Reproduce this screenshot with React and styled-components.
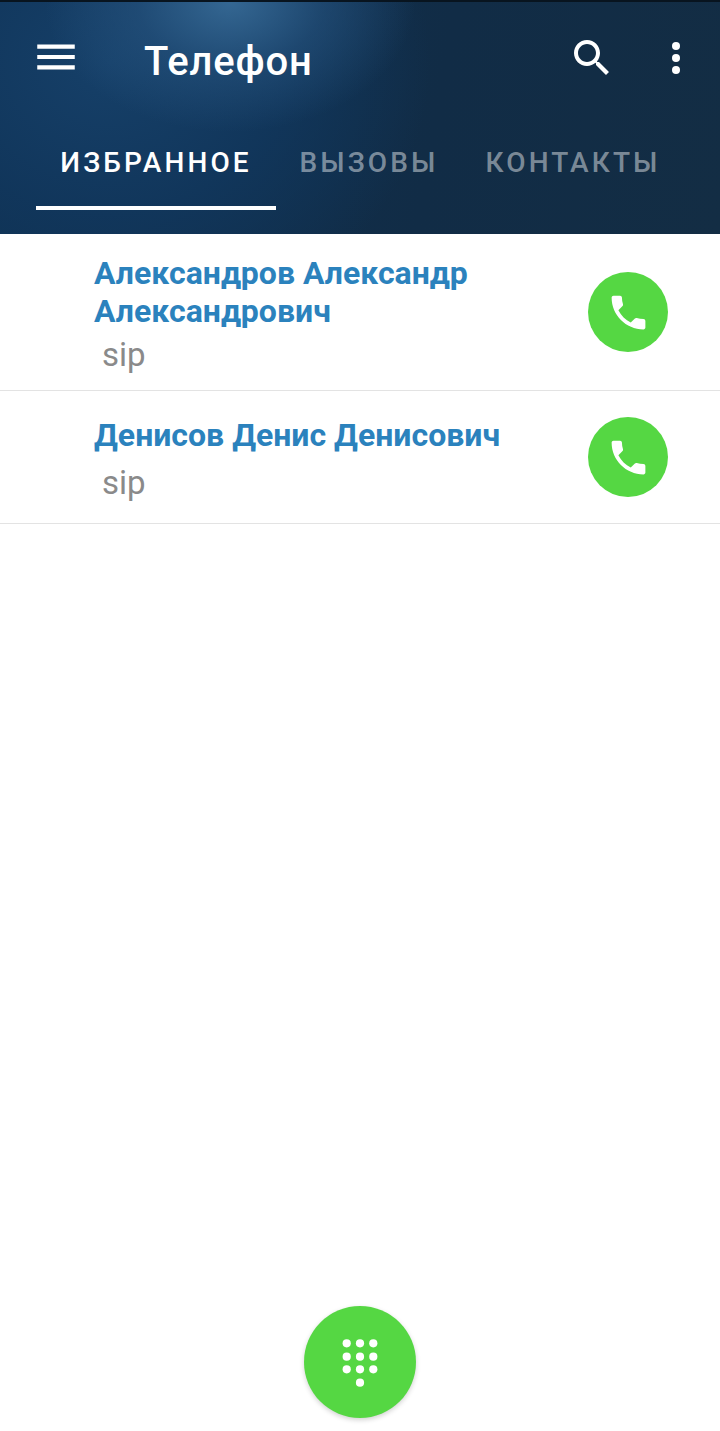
import React from 'react';
import styled, { createGlobalStyle } from 'styled-components';

const GlobalStyle = createGlobalStyle`
  html, body {
    margin: 0;
    padding: 0;
    background: #ffffff;
  }
`;

const Screen = styled.div`
  position: relative;
  width: 720px;
  height: 1431px;
  overflow: hidden;
  background: #ffffff;
  font-family: Roboto, "Liberation Sans", sans-serif;
`;

const Header = styled.header`
  height: 234px;
  box-sizing: border-box;
  border-top: 2px solid #08141f;
  background:
    radial-gradient(ellipse 185px 130px at 230px 0px, rgba(56, 108, 152, 0.9) 0%, rgba(40, 86, 130, 0.55) 50%, rgba(20, 58, 96, 0) 100%),
    radial-gradient(ellipse 320px 280px at 110px 60px, #164069 0%, rgba(17, 55, 93, 0.85) 55%, rgba(18, 50, 80, 0) 100%),
    linear-gradient(100deg, #0f3152 0%, #112c46 60%, #132d44 100%);
`;

const Toolbar = styled.div`
  display: flex;
  align-items: center;
  height: 112px;
  padding: 0 20px 0 31px;
`;

const Title = styled.h1`
  flex: 1;
  margin: 6px 0 0 63px;
  font-size: 40px;
  font-weight: 500;
  letter-spacing: 0.8px;
  color: #ffffff;
`;

const ToolIcon = styled.svg`
  display: block;
  flex: none;
  fill: #ffffff;
  margin-left: ${(p) => p.$gap || 0}px;
  margin-top: ${(p) => p.$lift || 0}px;
`;

const Tabs = styled.nav`
  display: flex;
  padding: 0 36px;
`;

const Tab = styled.div`
  flex: none;
  box-sizing: border-box;
  width: ${(p) => p.$width}px;
  height: 96px;
  text-align: center;
  font-size: 28px;
  line-height: 98px;
  font-weight: 500;
  letter-spacing: 3.1px;
  white-space: nowrap;
  color: ${(p) => (p.$active ? '#ffffff' : 'rgba(255, 255, 255, 0.45)')};
  border-bottom: 4px solid ${(p) => (p.$active ? '#ffffff' : 'transparent')};
`;

const Row = styled.div`
  display: flex;
  align-items: center;
  box-sizing: border-box;
  height: ${(p) => p.$height}px;
  padding: 0 52px 0 94px;
  border-bottom: 1px solid #e3e3e3;
`;

const Info = styled.div`
  flex: 1;
  min-width: 0;
  align-self: flex-start;
  padding-top: ${(p) => p.$top}px;
`;

const Name = styled.div`
  font-size: 32px;
  line-height: 38px;
  font-weight: 700;
  color: #2b82bd;
`;

const Sip = styled.div`
  margin: ${(p) => p.$gap}px 0 0 8px;
  font-size: 33px;
  line-height: 36px;
  color: #8a8a8a;
`;

const CallButton = styled.div`
  flex: none;
  display: flex;
  align-items: center;
  justify-content: center;
  width: 80px;
  height: 80px;
  border-radius: 50%;
  background: #55d743;
`;

const DialButton = styled.div`
  position: absolute;
  left: 304px;
  top: 1306px;
  display: flex;
  align-items: center;
  justify-content: center;
  width: 112px;
  height: 112px;
  border-radius: 50%;
  background: #55d743;
  box-shadow: 0 2px 5px rgba(0, 0, 0, 0.18);
`;

const Hamburger = () => (
  <ToolIcon $lift={-2} width="50" height="50" viewBox="0 0 24 24">
    <path d="M3 18h18v-2H3v2zm0-5h18v-2H3v2zm0-7v2h18V6H3z" />
  </ToolIcon>
);

const SearchIcon = () => (
  <ToolIcon width="48" height="48" viewBox="0 0 24 24">
    <path d="M15.5 14h-.79l-.28-.27C15.41 12.59 16 11.11 16 9.5 16 5.91 13.09 3 9.5 3S3 5.91 3 9.5 5.91 16 9.5 16c1.61 0 3.09-.59 4.23-1.57l.27.28v.79l5 4.99L20.49 19l-4.99-5zm-6 0C7.01 14 5 11.99 5 9.5S7.01 5 9.5 5 14 7.01 14 9.5 11.99 14 9.5 14z" />
  </ToolIcon>
);

const MoreIcon = () => (
  <ToolIcon $gap={36} width="48" height="48" viewBox="0 0 24 24">
    <circle cx="12" cy="6" r="2" />
    <circle cx="12" cy="12" r="2" />
    <circle cx="12" cy="18" r="2" />
  </ToolIcon>
);

const PhoneIcon = () => (
  <ToolIcon width="45" height="45" viewBox="0 0 24 24">
    <path d="M6.62 10.79c1.44 2.83 3.76 5.14 6.59 6.59l2.2-2.2c.27-.27.67-.36 1.02-.24 1.12.37 2.33.57 3.57.57.55 0 1 .45 1 1V20c0 .55-.45 1-1 1-9.39 0-17-7.61-17-17 0-.55.45-1 1-1h3.5c.55 0 1 .45 1 1 0 1.25.2 2.45.57 3.57.11.35.03.74-.25 1.02l-2.2 2.2z" />
  </ToolIcon>
);

const dialDots = [
  [13.7, 14.3], [27, 14.3], [40.3, 14.3],
  [13.7, 27.7], [27, 27.7], [40.3, 27.7],
  [13.7, 40.3], [27, 40.3], [40.3, 40.3],
  [27, 53.7],
];

const DialIcon = () => (
  <ToolIcon width="54" height="66" viewBox="0 0 54 66">
    {dialDots.map(([x, y]) => (
      <circle key={`${x}-${y}`} cx={x} cy={y} r="4.1" />
    ))}
  </ToolIcon>
);

const contacts = [
  { name: 'Александров Александр Александрович', height: 157, top: 20, gap: 7 },
  { name: 'Денисов Денис Денисович', height: 133, top: 25, gap: 11 },
];

export default function App() {
  return (
    <Screen>
      <GlobalStyle />
      <Header>
        <Toolbar>
          <Hamburger />
          <Title>Телефон</Title>
          <SearchIcon />
          <MoreIcon />
        </Toolbar>
        <Tabs>
          <Tab $active $width={240}>ИЗБРАННОЕ</Tab>
          <Tab $width={186}>ВЫЗОВЫ</Tab>
          <Tab $width={222}>КОНТАКТЫ</Tab>
        </Tabs>
      </Header>
      {contacts.map((c) => (
        <Row key={c.name} $height={c.height}>
          <Info $top={c.top}>
            <Name>{c.name}</Name>
            <Sip $gap={c.gap}>sip</Sip>
          </Info>
          <CallButton>
            <PhoneIcon />
          </CallButton>
        </Row>
      ))}
      <DialButton>
        <DialIcon />
      </DialButton>
    </Screen>
  );
}
